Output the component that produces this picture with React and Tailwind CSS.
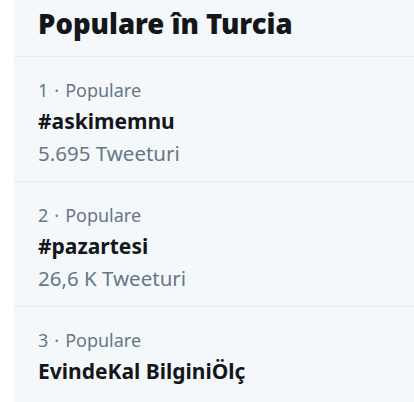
const trends = [
  { rank: 1, name: '#askimemnu', count: '5.695 Tweeturi' },
  { rank: 2, name: '#pazartesi', count: '26,6 K Tweeturi' },
  { rank: 3, name: 'EvindeKal BilginiÖlç', count: null },
];

export default function App() {
  return (
    <div className="h-[402px] w-[414px] overflow-hidden bg-white font-['Noto_Sans',sans-serif]">
      <div className="ml-[14px] w-[420px] rounded-b-2xl bg-[#f5f8fa]">
        <div className="h-[57px] border-b border-[#e6ecf0] px-[24px]">
          <h2 className="text-[27.5px] font-black leading-[48px] text-[#14171a]">Populare în Turcia</h2>
        </div>
        {trends.map((t) => (
          <div key={t.rank} className="h-[125px] border-b border-[#e6ecf0] px-[24px] pt-[19px]">
            <div className="text-[18px] leading-[29px] text-[#657786]">
              {t.rank}<span className="mx-[6px]">·</span>Populare
            </div>
            <div className="text-[21px] font-bold leading-[32px] text-[#14171a]">{t.name}</div>
            {t.count && (
              <div className="text-[20.5px] leading-[32px] text-[#657786]">{t.count}</div>
            )}
          </div>
        ))}
      </div>
    </div>
  );
}
